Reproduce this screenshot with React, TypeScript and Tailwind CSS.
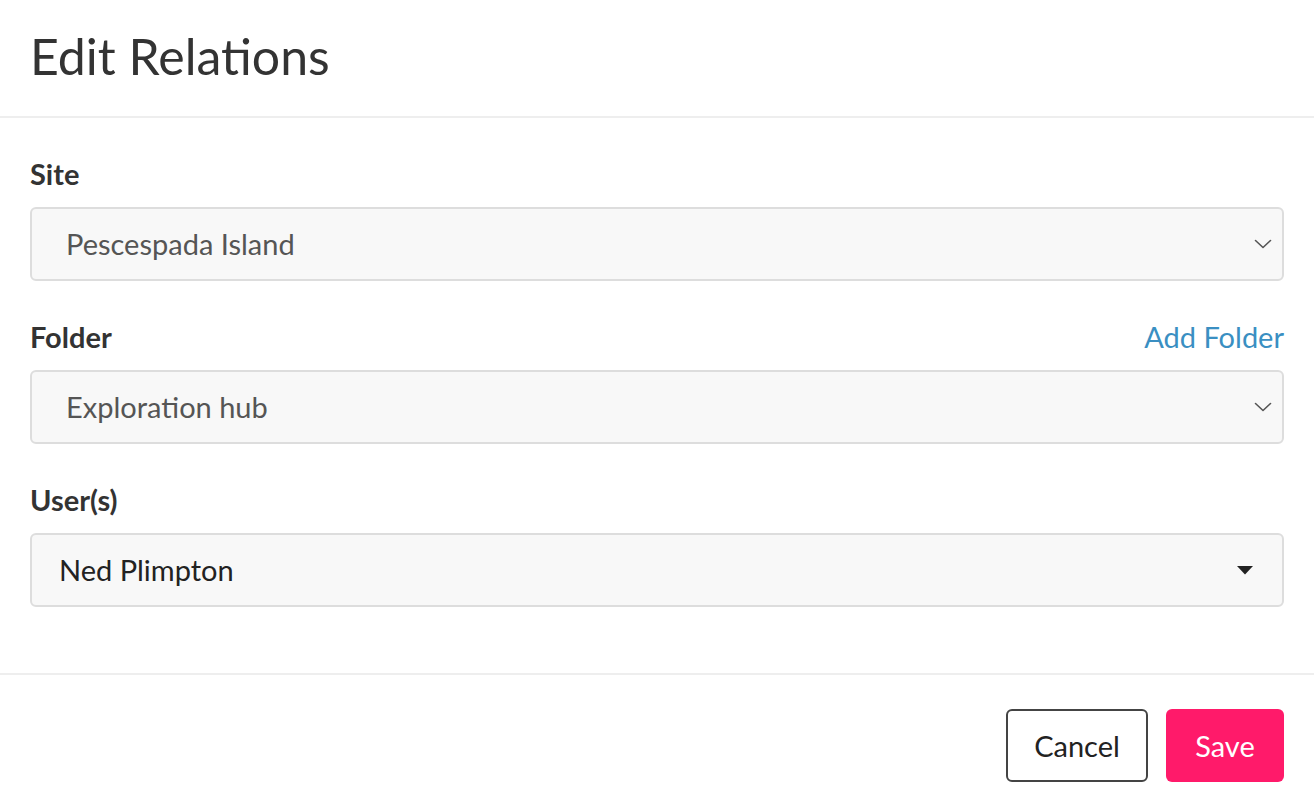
import React from "react";

const font = { fontFamily: "Lato, 'Noto Sans', sans-serif" };

function Chevron() {
  return (
    <svg width="18" height="10" viewBox="0 0 18 10" fill="none">
      <path d="M1.5 1.5 L9 8.5 L16.5 1.5" stroke="#555" strokeWidth="1.6" strokeLinecap="round" strokeLinejoin="round" />
    </svg>
  );
}

function Caret() {
  return (
    <svg width="16" height="9" viewBox="0 0 16 9">
      <path d="M0 0 L16 0 L8 8.5 Z" fill="#222" />
    </svg>
  );
}

export default function App() {
  return (
    <div className="w-[1314px] h-[804px] bg-white text-[#333] flex flex-col" style={font}>
      <div className="h-[118px] border-b-2 border-[#eeeeee] px-[30px] flex items-center">
        <h1 className="text-[50px] leading-none text-[#333] pb-[4px]">Edit Relations</h1>
      </div>
      <div className="flex-1 px-[30px] pt-[38px] flex flex-col">
        <div className="text-[29px] font-bold leading-[36px] text-[#333]">Site</div>
        <div className="mt-[15px] h-[74px] rounded-[6px] border-2 border-[#dddddd] bg-[#f8f8f8] flex items-center justify-between pl-[34px] pr-[10px]">
          <span className="text-[29px] text-[#555]">Pescespada Island</span>
          <Chevron />
        </div>
        <div className="mt-[38px] flex items-center justify-between leading-[36px]">
          <span className="text-[29px] font-bold text-[#333]">Folder</span>
          <span className="text-[29px] text-[#3a8fc2]">Add Folder</span>
        </div>
        <div className="mt-[15px] h-[74px] rounded-[6px] border-2 border-[#dddddd] bg-[#f8f8f8] flex items-center justify-between pl-[34px] pr-[10px]">
          <span className="text-[29px] text-[#555]">Exploration hub</span>
          <Chevron />
        </div>
        <div className="mt-[38px] text-[29px] font-bold leading-[36px] text-[#333]">User(s)</div>
        <div className="mt-[15px] h-[74px] rounded-[6px] border-2 border-[#dddddd] bg-[#f8f8f8] flex items-center justify-between pl-[27px] pr-[29px]">
          <span className="text-[29px] text-[#222]">Ned Plimpton</span>
          <Caret />
        </div>
      </div>
      <div className="h-[131px] border-t-2 border-[#eeeeee] px-[30px] flex items-start justify-end gap-[18px] pt-[34px]">
        <button className="w-[142px] h-[73px] rounded-[6px] border-2 border-[#444] bg-white text-[29px] text-[#222]" style={font}>Cancel</button>
        <button className="w-[118px] h-[73px] rounded-[6px] bg-[#ff1a6a] text-[29px] text-white" style={font}>Save</button>
      </div>
    </div>
  );
}
